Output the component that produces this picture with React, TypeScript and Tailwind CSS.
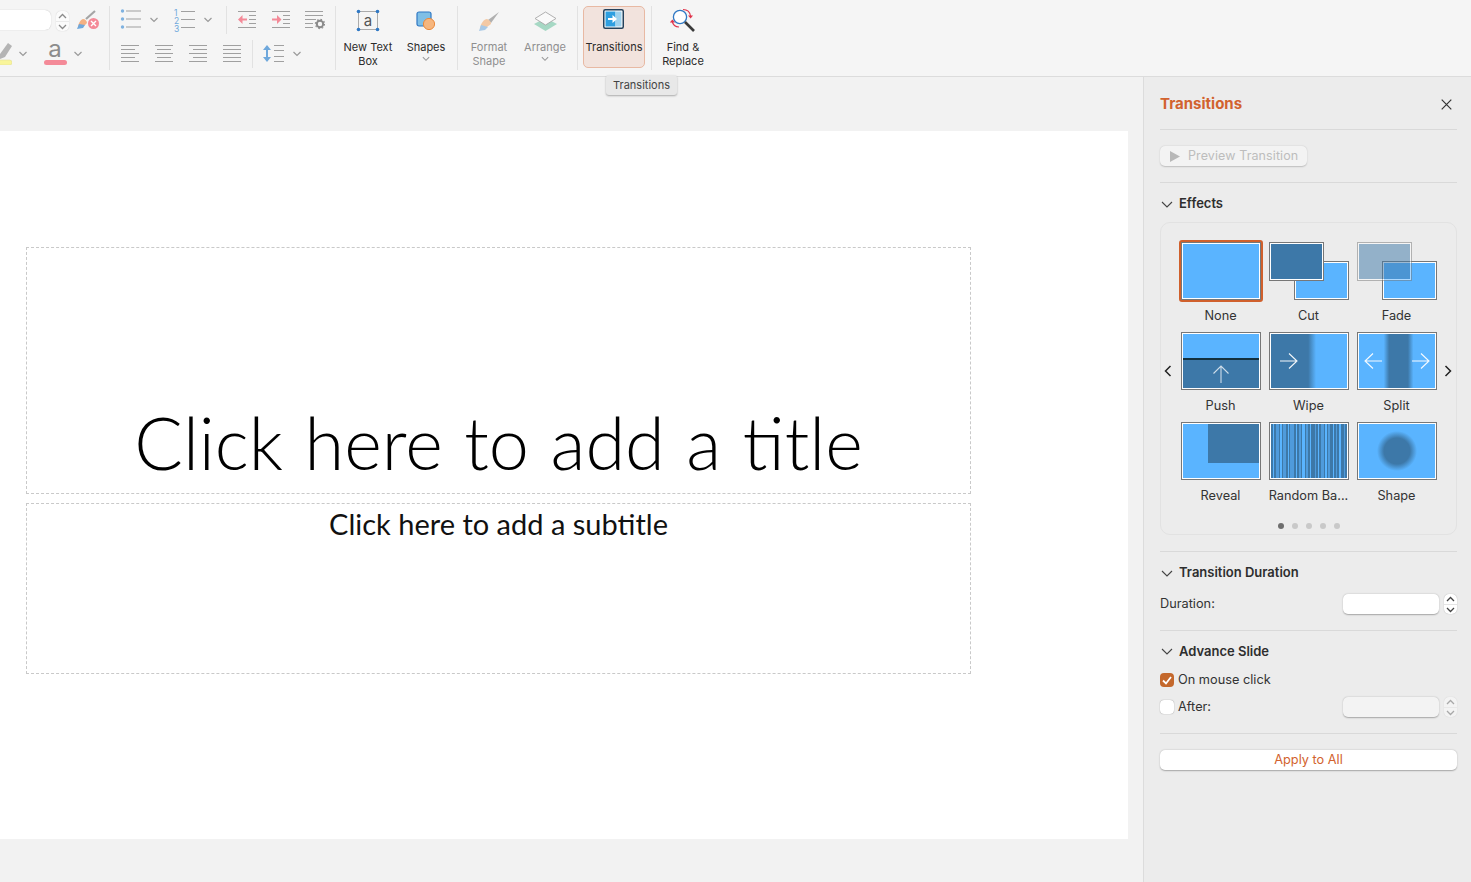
const ui = "font-['Inter','Liberation_Sans',sans-serif]";

const Divider = () => <div className="my-[6px] w-px shrink-0 bg-[#e2e2e2]" />;

const Caret = ({ className = "" }: { className?: string }) => (
  <svg width="10" height="6" viewBox="0 0 10 6" fill="none" className={className}>
    <path d="M1.5 1 L5 4.5 L8.5 1" stroke="#9a9a9a" strokeWidth="1.2" />
  </svg>
);

const Lines = ({ rows }: { rows: number[][] }) => (
  <svg width="18" height="18" viewBox="0 0 18 18" className="shrink-0">
    {rows.map(([x1, x2], i) => (
      <rect key={i} x={x1} y={i * 4} width={x2 - x1} height="1" fill="#a0a0a0" />
    ))}
  </svg>
);

const AlignLeft = () => <Lines rows={[[0, 18], [0, 14], [0, 18], [0, 14], [0, 18]]} />;
const AlignCenter = () => <Lines rows={[[0, 18], [2, 16], [0, 18], [2, 16], [0, 18]]} />;
const AlignRight = () => <Lines rows={[[0, 18], [4, 18], [0, 18], [4, 18], [0, 18]]} />;
const AlignJustify = () => <Lines rows={[[0, 18], [0, 18], [0, 18], [0, 18], [0, 18]]} />;

const Bullets = () => (
  <svg width="21" height="22" viewBox="0 0 21 22">
    {[3, 11, 19].map((y) => (
      <g key={y}>
        <circle cx="2.5" cy={y} r="1.7" fill="#7fb2e0" />
        <rect x="6" y={y - 0.5} width="15" height="1" fill="#a0a0a0" />
      </g>
    ))}
  </svg>
);

const Numbers = () => (
  <svg width="21" height="24" viewBox="0 0 21 24">
    {["1", "2", "3"].map((n, i) => (
      <g key={n}>
        <text x="0" y={7.5 + i * 8} fontSize="8.5" fill="#6fa8dc" fontFamily="Inter">{n}</text>
        <rect x="7" y={3 + i * 8} width="14" height="1" fill="#a0a0a0" />
      </g>
    ))}
  </svg>
);

const Outdent = ({ flip = false }: { flip?: boolean }) => (
  <svg width="18" height="18" viewBox="0 0 18 18">
    <rect x="0" y="0" width="18" height="1" fill="#a0a0a0" />
    <rect x="0" y="16" width="18" height="1" fill="#a0a0a0" />
    {[4, 8, 12].map((y) => (
      <rect key={y} x="11" y={y} width="7" height="1" fill="#a0a0a0" />
    ))}
    {flip ? (
      <path d="M0 7.4 H5 V4 L9.5 8.5 L5 13 V9.6 H0 Z" fill="#f48a98" />
    ) : (
      <path d="M9 7.4 H4.5 V4 L0 8.5 L4.5 13 V9.6 H9 Z" fill="#f48a98" />
    )}
  </svg>
);

const ListSettings = () => (
  <svg width="20" height="19" viewBox="0 0 20 19">
    <rect x="0" y="0" width="18" height="1" fill="#a0a0a0" />
    <rect x="0" y="4" width="18" height="1" fill="#a0a0a0" />
    <rect x="0" y="8" width="11" height="1" fill="#a0a0a0" />
    <rect x="0" y="12" width="8" height="1" fill="#a0a0a0" />
    <rect x="0" y="16" width="8" height="1" fill="#a0a0a0" />
    <circle cx="15" cy="13" r="3.2" fill="none" stroke="#8a8a8a" strokeWidth="2" />
    <circle cx="15" cy="13" r="4.6" fill="none" stroke="#8a8a8a" strokeWidth="1.2" strokeDasharray="1.6 2" />
  </svg>
);

const LineSpacing = () => (
  <svg width="21" height="18" viewBox="0 0 21 18">
    <path d="M4 0 L8 5 H5 V12 H8 L4 17 L0 12 H3 V5 H0 Z" fill="#6fa8dc" />
    <rect x="11" y="0" width="10" height="1" fill="#a0a0a0" />
    <rect x="11" y="5" width="10" height="1" fill="#a0a0a0" />
    <rect x="11" y="11" width="10" height="1" fill="#a0a0a0" />
    <rect x="11" y="16" width="10" height="1" fill="#a0a0a0" />
  </svg>
);

const ClearFormat = () => (
  <svg width="23" height="20" viewBox="0 0 23 20">
    <path d="M9 9 L18 1" stroke="#a5a5a5" strokeWidth="2.2" />
    <path d="M1 18 C1 14 3 10 6 9 C8 9 10 11 10 13 L8 15 Z" fill="#f4b183" />
    <path d="M0 19 L2 14 L8 15 L6 18 Z" fill="#6fa8dc" />
    <circle cx="16.5" cy="13.5" r="5.5" fill="#f48a98" />
    <path d="M14 11 L19 16 M19 11 L14 16" stroke="#fff" strokeWidth="1.4" />
  </svg>
);

const Stepper = ({ faded = false, className = "" }: { faded?: boolean; className?: string }) => (
  <div className={`flex h-[20px] w-[13px] shrink-0 flex-col items-center justify-center gap-[2px] rounded-[5px] bg-white shadow-[0_0_1px_rgba(0,0,0,.35)] ${faded ? "opacity-40" : ""} ${className}`}>
    <svg width="9" height="6" viewBox="0 0 9 6" fill="none"><path d="M1 5 L4.5 1.5 L8 5" stroke="#444" strokeWidth="1.3" /></svg>
    <div className="h-px w-full bg-[#e4e4e4]" />
    <svg width="9" height="6" viewBox="0 0 9 6" fill="none"><path d="M1 1 L4.5 4.5 L8 1" stroke="#444" strokeWidth="1.3" /></svg>
  </div>
);

const FontGroup = () => (
  <div className="flex w-[109px] shrink-0 flex-col pt-[6px]">
    <div className="flex h-[34px] items-start pt-[4px]">
      <div className="h-[20px] w-[51px] rounded-r-[6px] bg-white shadow-[0_0_1px_rgba(0,0,0,.3)]" />
      <Stepper faded className="ml-[5px] mt-px opacity-60" />
      <div className="ml-[8px]"><ClearFormat /></div>
    </div>
    <div className="flex h-[28px] items-center">
      <svg width="12" height="24" viewBox="0 0 12 24" className="-mt-[2px]">
        <path d="M0 13 L8 2 L12 5 L5 16 L0 18 Z" fill="#b4b4b4" />
        <rect x="-6" y="19" width="18" height="5" rx="2.5" fill="#f9f59a" stroke="#e0dd9a" strokeWidth=".6" />
      </svg>
      <Caret className="ml-[6px]" />
      <div className="-mt-[3px] ml-[15px] flex w-[24px] flex-col items-center">
        <span className="text-[24px] leading-[18px] text-[#8c8c8c]">a</span>
        <div className="mt-[2px] h-[5px] w-[23px] rounded-full bg-[#f48a98]" />
      </div>
      <Caret className="ml-[6px]" />
    </div>
  </div>
);

const ParagraphGroup = () => (
  <div className="flex w-[225px] shrink-0 flex-col pt-[6px]">
    <div className="flex h-[34px] items-start pl-[10px] pt-[2px]">
      <Bullets />
      <Caret className="ml-[8px] mt-[9px]" />
      <div className="ml-[15px]"><Numbers /></div>
      <Caret className="ml-[8px] mt-[9px]" />
      <div className="-mt-[2px] ml-[13px] h-[28px] w-px bg-[#e2e2e2]" />
      <div className="ml-[11px] mt-[3px]"><Outdent /></div>
      <div className="ml-[16px] mt-[3px]"><Outdent flip /></div>
      <div className="ml-[15px] mt-[3px]"><ListSettings /></div>
    </div>
    <div className="flex h-[28px] items-start pl-[11px] pt-[5px]">
      <AlignLeft />
      <div className="ml-[16px]"><AlignCenter /></div>
      <div className="ml-[16px]"><AlignRight /></div>
      <div className="ml-[16px]"><AlignJustify /></div>
      <div className="-mt-[5px] ml-[11px] h-[28px] w-px bg-[#e2e2e2]" />
      <div className="ml-[10px]"><LineSpacing /></div>
      <Caret className="ml-[8px] mt-[6px]" />
    </div>
  </div>
);

const ToolButton = ({
  width,
  label,
  caret,
  disabled,
  active,
  icon,
}: {
  width: string;
  label: string[];
  caret?: boolean;
  disabled?: boolean;
  active?: boolean;
  icon: React.ReactNode;
}) => (
  <div
    className={`flex shrink-0 flex-col items-center rounded-[5px] ${width} ${
      active ? "h-[62px] border border-[#e8b9a3] bg-[#f2e3dd] pt-[1px]" : "pt-[2px]"
    } ${disabled ? "text-[#8f8f8f]" : "text-[#2b2b2b]"}`}
  >
    <div className="flex h-[32px] items-start justify-center">{icon}</div>
    {label.map((l) => (
      <div key={l} className="whitespace-nowrap text-[11px] leading-[14px]">{l}</div>
    ))}
    {caret && <Caret className="mt-[2px] scale-90" />}
  </div>
);

const Toolbar = () => (
  <div className={`flex h-[77px] shrink-0 border-b border-[#dcdcdc] bg-[#f5f5f5] ${ui}`}>
    <FontGroup />
    <Divider />
    <ParagraphGroup />
    <Divider />
    <div className="mt-[6px] flex">
      <ToolButton
        width="w-[64px]"
        label={["New Text", "Box"]}
        icon={
          <svg width="24" height="23" viewBox="0 0 24 23" className="mt-px">
            <rect x="2.5" y="2.5" width="19" height="18" fill="none" stroke="#9a9a9a" strokeWidth=".8" />
            <text x="12" y="16.5" textAnchor="middle" fontSize="15" fill="#555" fontFamily="Inter">a</text>
            {[[2.5, 2.5], [21.5, 2.5], [2.5, 20.5], [21.5, 20.5]].map(([cx, cy]) => (
              <circle key={`${cx}-${cy}`} cx={cx} cy={cy} r="1.8" fill="#2f78c4" />
            ))}
          </svg>
        }
      />
      <ToolButton
        width="w-[52px]"
        label={["Shapes"]}
        caret
        icon={
          <svg width="20" height="20" viewBox="0 0 20 20" className="mt-[3px]">
            <rect x="1" y="1" width="14" height="14" rx="2" fill="#7fbfe6" stroke="#2f78c4" strokeWidth="1.2" />
            <circle cx="13" cy="13" r="5.6" fill="#f6b67e" stroke="#ea8a3c" strokeWidth="1" />
          </svg>
        }
      />
    </div>
    <div className="w-[5px] shrink-0" />
    <Divider />
    <div className="mt-[6px] flex">
      <ToolButton
        width="w-[62px]"
        label={["Format", "Shape"]}
        disabled
        icon={
          <svg width="21" height="21" viewBox="0 0 21 21" className="mt-[3px]">
            <path d="M9 9 L20 1 L12 12 Z" fill="#b0b0b0" />
            <path d="M1 17 C2 12 5 8 8 8 C11 9 12 11 12 13 L8 16 Z" fill="#f4c9a4" />
            <path d="M0 20 L2 14 L9 16 L6 19 Z" fill="#a9c9e6" />
          </svg>
        }
      />
      <ToolButton
        width="w-[50px]"
        label={["Arrange"]}
        caret
        disabled
        icon={
          <svg width="23" height="21" viewBox="0 0 23 21" className="mt-[3px]">
            <path d="M0 13 L11.5 7 L23 13 L11.5 20 Z" fill="#a6d8c4" />
            <path d="M1 7.5 L11.5 1 L22 7.5 L11.5 14 Z" fill="#fafafa" stroke="#a8a8a8" strokeWidth=".9" />
          </svg>
        }
      />
    </div>
    <div className="w-[7px] shrink-0" />
    <Divider />
    <div className="ml-[5px] mr-[6px] mt-[6px] h-[62px]">
      <ToolButton
        width="w-[62px]"
        label={["Transitions"]}
        active
        icon={
          <svg width="21" height="20" viewBox="0 0 21 20" className="-ml-[1px] mt-[1px]">
            <rect x=".75" y=".75" width="19.5" height="18.5" rx="1.5" fill="#fff" stroke="#24425c" strokeWidth="1.5" />
            <rect x="2.5" y="2.5" width="10" height="15" fill="#2f9fe0" />
            <rect x="12.5" y="2.5" width="6" height="15" fill="#9fd2ee" />
            <path d="M5 9 H9.5 V6 L14 10 L9.5 14 V11 H5 Z" fill="#fff" />
          </svg>
        }
      />
    </div>
    <Divider />
    <div className="mt-[6px] flex">
      <ToolButton
        width="w-[62px]"
        label={["Find &", "Replace"]}
        icon={
          <svg width="26" height="25" viewBox="0 0 26 25" fill="none">
            <circle cx="10" cy="9" r="6.6" stroke="#2f78c4" strokeWidth="1.3" fill="#fff" />
            <path d="M15 14 L24 23" stroke="#3a3a3a" strokeWidth="2.6" />
            <path d="M13 1.5 C17 1.5 20 4 20.5 8" stroke="#e0334a" strokeWidth="1.1" />
            <path d="M18 7.5 L20.6 10.5 L23 7.5 Z" fill="#e0334a" />
            <path d="M2 13 C3 17 6 19 9 19" stroke="#e0334a" strokeWidth="1.1" />
            <path d="M-.2 14.5 L2.4 11.5 L5 14.5 Z" fill="#e0334a" />
          </svg>
        }
      />
    </div>
  </div>
);

const Slide = () => (
  <div className="flex min-w-0 flex-1 flex-col items-end bg-[#f2f2f2] pr-[15px] pt-[54px] font-['Lato','Open_Sans',sans-serif]">
    <div className="h-[708px] w-[1128px] bg-white pl-[26px] pt-[116px]">
      <div className="flex h-[247px] w-[945px] items-end justify-center border border-dashed border-[#c9c9c9] pb-[9px]">
        <span className="text-[72px] font-light leading-[84px] text-black [word-spacing:2px]">Click here to add a title</span>
      </div>
      <div className="mt-[9px] flex h-[171px] w-[945px] justify-center border border-dashed border-[#c9c9c9]">
        <span className="text-[29px] leading-[40px] text-[#111]">Click here to add a subtitle</span>
      </div>
    </div>
  </div>
);

const Thumb = ({ className = "", children }: { className?: string; children?: React.ReactNode }) => (
  <div className={`h-[58px] w-[80px] overflow-hidden border border-[#777] outline outline-1 -outline-offset-2 outline-white ${className}`}>
    {children}
  </div>
);

const Arrow = ({ dir, className = "" }: { dir: "left" | "right" | "up"; className?: string }) => {
  const d = {
    right: "M0 9 H16 M9 1.5 L17 9 L9 16.5",
    left: "M18 9 H2 M9 1.5 L1 9 L9 16.5",
    up: "M9 18 V1.5 M1.5 8.5 L9 1 L16.5 8.5",
  }[dir];
  return (
    <svg width="18" height="18" viewBox="0 0 18 18" fill="none" className={className}>
      <path d={d} stroke="#fff" strokeOpacity={dir === "up" ? 0.75 : 0.95} strokeWidth="1.1" />
    </svg>
  );
};

const barWidths = [2, 1, 2, 3, 1, 2, 1, 3, 2, 1, 1, 4, 2, 1, 2, 2, 1, 3, 1, 2, 2, 1, 4, 1, 2, 1, 2, 3, 1, 2, 1, 2, 3, 1, 2, 1, 2, 2, 3, 1];

const RandomBars = () => {
  let x = 0;
  return (
    <svg width="76" height="54" viewBox="0 0 76 54" className="m-px block">
      <rect width="76" height="54" fill="#3d78a8" />
      {barWidths.map((w, i) => {
        const bar = i % 2 === 1 ? <rect key={i} x={x} width={w} height="54" fill={i % 4 === 1 ? "#5ab4ff" : "#4f9bdc"} /> : null;
        x += w;
        return bar;
      })}
    </svg>
  );
};

const effects: { label: string; thumb: React.ReactNode }[] = [
  {
    label: "None",
    thumb: (
      <div className="-m-[2px] rounded-[3px] border-[2px] border-[#d0602c]">
        <Thumb className="bg-[#5ab4ff]" />
      </div>
    ),
  },
  {
    label: "Cut",
    thumb: (
      <div className="relative h-[58px] w-[80px]">
        <div className="absolute bottom-0 right-0 h-[39px] w-[55px] border border-[#777] bg-[#5ab4ff] outline outline-1 -outline-offset-2 outline-white" />
        <div className="absolute left-0 top-0 h-[39px] w-[55px] border border-[#777] bg-[#3d78a8] outline outline-1 -outline-offset-2 outline-white" />
      </div>
    ),
  },
  {
    label: "Fade",
    thumb: (
      <div className="relative h-[58px] w-[80px]">
        <div className="absolute bottom-0 right-0 h-[39px] w-[55px] border border-[#777] bg-[#5ab4ff] outline outline-1 -outline-offset-2 outline-white" />
        <div className="absolute left-0 top-0 h-[39px] w-[55px] border border-[#777] bg-[#3d78a8] opacity-50 outline outline-1 -outline-offset-2 outline-white" />
      </div>
    ),
  },
  {
    label: "Push",
    thumb: (
      <Thumb className="flex flex-col bg-[#5ab4ff]">
        <div className="h-[25px] shrink-0" />
        <div className="h-[2px] shrink-0 bg-[#12303f]" />
        <div className="flex flex-1 justify-center bg-[#3d78a8] pt-[5px]"><Arrow dir="up" /></div>
      </Thumb>
    ),
  },
  {
    label: "Wipe",
    thumb: (
      <Thumb className="flex items-center bg-[linear-gradient(to_right,#3d78a8_49%,#5ab4ff_59%)] pb-[1px] pl-[10px]">
        <Arrow dir="right" />
      </Thumb>
    ),
  },
  {
    label: "Split",
    thumb: (
      <Thumb className="flex items-center justify-between bg-[linear-gradient(to_right,#5ab4ff_33%,#3d78a8_40%,#3d78a8_64%,#5ab4ff_71%)] px-[6px] pb-[1px]">
        <Arrow dir="left" />
        <Arrow dir="right" />
      </Thumb>
    ),
  },
  {
    label: "Reveal",
    thumb: (
      <Thumb className="flex justify-end bg-[#5ab4ff] p-[1px]">
        <div className="h-[39px] w-[51px] bg-[#3d78a8]" />
      </Thumb>
    ),
  },
  { label: "Random Ba...", thumb: <Thumb className="bg-[#3d78a8]"><RandomBars /></Thumb> },
  {
    label: "Shape",
    thumb: <Thumb className="bg-[radial-gradient(circle_20px_at_50%_50%,#3d78a8_65%,#5ab4ff_100%)]" />,
  },
];

const SideChevron = ({ d, className = "" }: { d: string; className?: string }) => (
  <div className={`mb-[12px] flex w-[20px] shrink-0 justify-center ${className}`}>
    <svg width="8" height="12" viewBox="0 0 8 12" fill="none"><path d={d} stroke="#222" strokeWidth="1.5" /></svg>
  </div>
);

const SectionTitle = ({ children }: { children: string }) => (
  <div className="flex items-center gap-[6px] text-[13px] font-semibold text-[#2e2e2e]">
    <svg width="12" height="7" viewBox="0 0 12 7" fill="none" className="shrink-0"><path d="M1 1 L6 6 L11 1" stroke="#444" strokeWidth="1.1" /></svg>
    {children}
  </div>
);

const Field = ({ faded = false }: { faded?: boolean }) => (
  <div className="flex items-center gap-[5px]">
    <div className={`h-[20px] w-[96px] rounded-[5px] shadow-[0_0.5px_1.5px_rgba(0,0,0,.3)] ${faded ? "bg-[#f3f3f3]" : "bg-white"}`} />
    <Stepper faded={faded} />
  </div>
);

const Panel = () => (
  <div className={`flex w-[328px] shrink-0 flex-col border-l border-[#dcdcdc] bg-[#ececec] pl-[16px] pr-[14px] text-[12.75px] text-[#333] ${ui}`}>
    <div className="flex h-[53px] shrink-0 items-center justify-between border-b border-[#d9d9d9] pr-[5px] pt-[3px]">
      <span className="text-[15px] font-bold text-[#d2622e]">Transitions</span>
      <svg width="11" height="11" viewBox="0 0 11 11" fill="none"><path d="M.7 .7 L10.3 10.3 M10.3 .7 L.7 10.3" stroke="#333" strokeWidth="1.2" /></svg>
    </div>
    <div className="flex h-[53px] shrink-0 items-center border-b border-[#d9d9d9]">
      <div className="flex h-[20px] w-[147px] items-center gap-[8px] rounded-[5px] bg-[#f3f3f3] pl-[10px] text-[12.5px] tracking-[0.1px] text-[#bdbdbd] shadow-[0_0.5px_1.5px_rgba(0,0,0,.2)]">
        <svg width="10" height="11" viewBox="0 0 10 11"><path d="M0 0 L10 5.5 L0 11 Z" fill="#b8b8b8" /></svg>
        Preview Transition
      </div>
    </div>
    <div className="flex h-[39px] shrink-0 items-center pl-[1px] pt-[3px]"><SectionTitle>Effects</SectionTitle></div>
    <div className="flex h-[313px] shrink-0 flex-col rounded-[10px] border border-[#e2e2e2] pt-[19px]">
      <div className="flex items-center">
        <SideChevron d="M6.5 1 L1.5 6 L6.5 11" className="pr-[6px]" />
        <div className="grid grid-cols-[repeat(3,80px)] auto-rows-[90px] gap-x-[8px]">
          {effects.map((e) => (
            <div key={e.label} className="flex flex-col items-center">
              {e.thumb}
              <span className="-ml-[1px] mt-[7px] whitespace-nowrap text-[12.75px] leading-[18px]">{e.label}</span>
            </div>
          ))}
        </div>
        <SideChevron d="M1.5 1 L6.5 6 L1.5 11" className="pl-[2px]" />
      </div>
      <div className="mt-[11px] flex justify-center gap-[8px]">
        {[0, 1, 2, 3, 4].map((i) => (
          <div key={i} className={`size-[6px] rounded-full ${i === 0 ? "bg-[#6e6e6e]" : "bg-[#c9c9c9]"}`} />
        ))}
      </div>
    </div>
    <div className="mt-[16px] flex h-[79px] shrink-0 flex-col border-t border-[#d9d9d9]">
      <div className="flex h-[42px] items-center pl-[1px]"><SectionTitle>Transition Duration</SectionTitle></div>
      <div className="flex items-center justify-between">
        <span>Duration:</span>
        <Field />
      </div>
    </div>
    <div className="flex h-[103px] shrink-0 flex-col border-t border-[#d9d9d9]">
      <div className="flex h-[41px] items-center pl-[1px]"><SectionTitle>Advance Slide</SectionTitle></div>
      <div className="mt-px flex h-[14px] items-center gap-[4px]">
        <div className="flex size-[14px] items-center justify-center rounded-[4px] bg-[#c4682c]">
          <svg width="10" height="9" viewBox="0 0 10 9" fill="none"><path d="M1 4.5 L4 7.5 L9 1" stroke="#fff" strokeWidth="1.8" /></svg>
        </div>
        On mouse click
      </div>
      <div className="mt-[10px] flex items-center justify-between">
        <div className="flex items-center gap-[4px]">
          <div className="size-[14px] rounded-[4px] bg-white shadow-[0_0_1px_rgba(0,0,0,.5)]" />
          After:
        </div>
        <Field faded />
      </div>
    </div>
    <div className="border-t border-[#d9d9d9] pt-[16px]">
      <div className="flex h-[20px] items-center justify-center rounded-[5px] bg-white text-[12.75px] text-[#d2622e] shadow-[0_0.5px_1.5px_rgba(0,0,0,.3)]">
        Apply to All
      </div>
    </div>
  </div>
);

const Tooltip = () => (
  <div className={`absolute left-[606px] top-[75px] flex h-[20px] w-[71px] items-center justify-center rounded-[3px] bg-[#e8e8e8] text-[11px] text-[#444] shadow-[0_1px_2px_rgba(0,0,0,.3)] ${ui}`}>
    Transitions
  </div>
);

export default function App() {
  return (
    <div className="relative flex h-[882px] w-[1471px] flex-col overflow-hidden bg-[#f2f2f2]">
      <Toolbar />
      <div className="flex min-h-0 flex-1">
        <Slide />
        <Panel />
      </div>
      <Tooltip />
    </div>
  );
}
